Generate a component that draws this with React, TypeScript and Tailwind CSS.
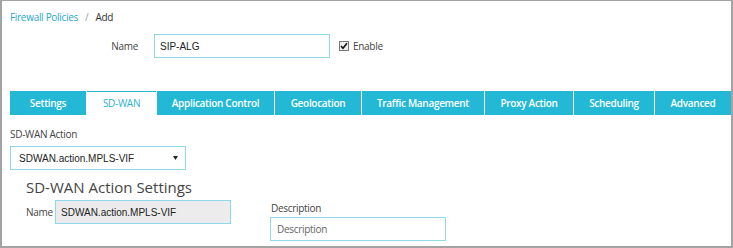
import React from 'react';

const tabs = [
  { label: 'Settings', width: 'w-[76px]' },
  { label: 'SD-WAN', width: 'w-[69px]', active: true },
  { label: 'Application Control', width: 'w-[117px]' },
  { label: 'Geolocation', width: 'w-[86px]' },
  { label: 'Traffic Management', width: 'w-[122px]' },
  { label: 'Proxy Action', width: 'w-[88px]' },
  { label: 'Scheduling', width: 'w-[80px]' },
  { label: 'Advanced', width: 'w-[76px]' },
];

const sans = "font-['Open_Sans',sans-serif]";
const arial = "font-['Liberation_Sans',Arial,sans-serif]";

export default function App() {
  return (
    <div className={`w-[733px] h-[248px] overflow-hidden bg-white border-t border-l-2 border-r-2 border-b-2 border-[#a3a3a3] pl-[8px] ${sans} tracking-[-0.3px]`}>
      {/* breadcrumb */}
      <div className="pt-[8px] flex items-center h-[24px] text-[10px] leading-[16px]">
        <a className="text-[#2aa6cf]">Firewall Policies</a>
        <span className="mx-[7px] text-[#999]">/</span>
        <span className="text-[#333]">Add</span>
      </div>

      {/* name row */}
      <div className="mt-[9px] flex items-center h-[24px]">
        <label className="w-[128px] text-right text-[10px] text-[#444]">Name</label>
        <input
          readOnly
          value="SIP-ALG"
          className={`ml-[16px] w-[176px] h-[24px] border border-[#8fd8ea] px-[5px] text-[10px] tracking-normal text-[#222] outline-none ${arial}`}
        />
        <span className="ml-[9px] w-[10px] h-[10px] border border-[#777] bg-[#eee] flex items-center justify-center">
          <svg width="8" height="8" viewBox="0 0 8 8">
            <path d="M1 4 L3 6.3 L7 1.3" stroke="#111" strokeWidth="1.6" fill="none" />
          </svg>
        </span>
        <span className="ml-[4px] text-[10px] text-[#444]">Enable</span>
      </div>

      {/* tabs */}
      <div className="mt-[33px] flex gap-[1px] h-[24px]">
        {tabs.map(t => (
          <div
            key={t.label}
            className={`${t.width} shrink-0 flex items-center justify-center text-[10px] ${
              t.active ? 'bg-white text-[#2ab3d3] border-t border-[#2ab3d3]' : 'bg-[#23b9d6] text-white font-semibold'
            }`}
          >
            {t.label}
          </div>
        ))}
      </div>

      {/* sd-wan action */}
      <div className="mt-[12px] text-[10px] leading-[14px] text-[#444]">SD-WAN Action</div>
      <div className={`mt-[5px] w-[176px] h-[24px] border border-[#8fd8ea] flex items-center justify-between pl-[8px] pr-[7px] text-[10px] tracking-normal text-[#222] ${arial}`}>
        <span>SDWAN.action.MPLS-VIF</span>
        <svg width="5" height="4" viewBox="0 0 5 4"><path d="M0 0 L5 0 L2.5 4 Z" fill="#222" /></svg>
      </div>

      {/* settings */}
      <div className="pl-[16px]">
        <div className="mt-[7px] text-[15px] leading-[20px] tracking-normal text-[#444]">SD-WAN Action Settings</div>
        <div className="mt-[3px] flex">
          <div className="flex items-start">
            <span className="w-[29px] text-[10px] text-[#444] mt-[5px]">Name</span>
            <div className={`w-[176px] h-[24px] border border-[#8fd8ea] bg-[#ececec] flex items-center px-[5px] text-[10px] tracking-normal text-[#222] ${arial}`}>
              SDWAN.action.MPLS-VIF
            </div>
          </div>
          <div className="ml-[39px] mt-[1px] flex flex-col">
            <span className="text-[10px] leading-[14px] text-[#444] pl-[1px]">Description</span>
            <div className="mt-[2px] w-[176px] h-[24px] border border-[#8fd8ea] flex items-center px-[6px] text-[10px] text-[#666]">
              Description
            </div>
          </div>
        </div>
      </div>
    </div>
  );
}
